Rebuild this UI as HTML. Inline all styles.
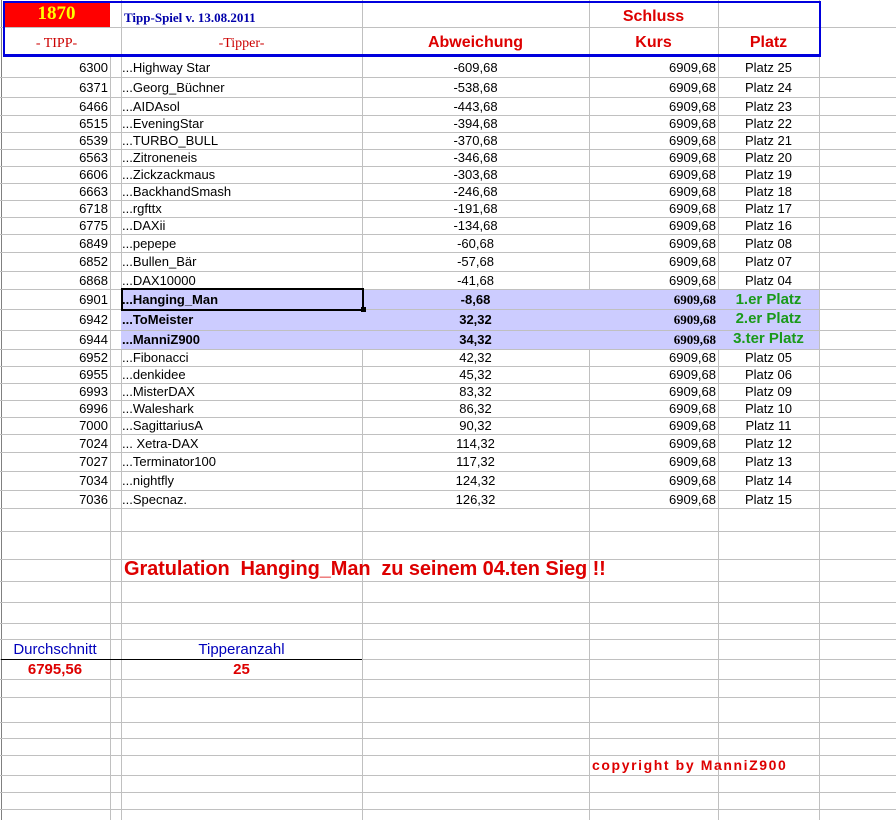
<!DOCTYPE html>
<html><head><meta charset="utf-8"><style>
html,body{overflow:hidden}
body{margin:0;width:896px;height:820px;background:#fff;position:relative;overflow:hidden;font-family:"Liberation Sans",sans-serif;}
.h{position:absolute;left:0;width:896px;height:1px;background:#c0c0c0}
.v{position:absolute;top:0;height:820px;width:1px;background:#c0c0c0}
.r{position:absolute;left:0;width:896px;font-size:13px;color:#000}
.r span{position:absolute;top:0;white-space:nowrap}
.t{right:788px}
.n{left:122px}
.a{left:362px;width:227px;text-align:center}
.k{right:180px}
.p{left:718px;width:101px;text-align:center}
.hl{background:#ccccff}
.b{font-weight:bold}
.b .k{font-family:"Liberation Serif",serif;font-size:13px}
.g{color:#1a9a1a;font-weight:bold;font-size:15px}
</style></head><body>
<div class="v" style="left:1px;background:#808080"></div>
<div class="v" style="left:110px;top:55px;height:765px"></div>
<div class="v" style="left:121px"></div>
<div class="v" style="left:362px"></div>
<div class="v" style="left:589px"></div>
<div class="v" style="left:718px"></div>
<div class="v" style="left:819px"></div>

<div class="hl" style="position:absolute;left:121px;top:289px;width:698px;height:60px"></div>

<div class="h" style="top:27px"></div>
<div class="h" style="top:77px"></div><div class="h" style="top:97px"></div><div class="h" style="top:115px"></div><div class="h" style="top:132px"></div><div class="h" style="top:149px"></div><div class="h" style="top:166px"></div><div class="h" style="top:183px"></div><div class="h" style="top:200px"></div><div class="h" style="top:217px"></div><div class="h" style="top:234px"></div><div class="h" style="top:252px"></div><div class="h" style="top:271px"></div><div class="h" style="top:289px"></div><div class="h" style="top:309px"></div><div class="h" style="top:330px"></div><div class="h" style="top:349px"></div><div class="h" style="top:366px"></div><div class="h" style="top:383px"></div><div class="h" style="top:400px"></div><div class="h" style="top:417px"></div><div class="h" style="top:434px"></div><div class="h" style="top:452px"></div><div class="h" style="top:471px"></div><div class="h" style="top:490px"></div><div class="h" style="top:508px"></div><div class="h" style="top:531px"></div><div class="h" style="top:559px"></div><div class="h" style="top:581px"></div><div class="h" style="top:602px"></div><div class="h" style="top:623px"></div><div class="h" style="top:639px"></div><div class="h" style="top:659px"></div><div class="h" style="top:679px"></div><div class="h" style="top:697px"></div><div class="h" style="top:722px"></div><div class="h" style="top:738px"></div><div class="h" style="top:755px"></div><div class="h" style="top:775px"></div><div class="h" style="top:792px"></div><div class="h" style="top:809px"></div>

<!-- header -->
<div style="position:absolute;left:3px;top:2px;width:107px;height:25px;background:#ff0000;"></div>
<div style="position:absolute;left:3px;top:3px;width:107px;height:27px;line-height:27px;text-align:center;font:bold 19px 'Liberation Serif',serif;color:#ffff00">1870</div>
<div style="position:absolute;left:3px;top:1px;height:51px;border:2px solid #0000dd;border-bottom-width:3px;width:814px"></div>
<div style="position:absolute;left:124px;top:10px;font:bold 13px 'Liberation Serif',serif;color:#0000aa">Tipp-Spiel v. 13.08.2011</div>
<div style="position:absolute;left:589px;width:129px;top:8px;text-align:center;font:bold 16px 'Liberation Sans',sans-serif;color:#dd0000">Schluss</div>
<div style="position:absolute;left:3px;width:107px;top:36px;text-align:center;font:14px 'Liberation Serif',serif;color:#cc0000">- TIPP-</div>
<div style="position:absolute;left:121px;width:241px;top:36px;text-align:center;font:14px 'Liberation Serif',serif;color:#cc0000">-Tipper-</div>
<div style="position:absolute;left:362px;width:227px;top:34px;text-align:center;font:bold 16px 'Liberation Sans',sans-serif;color:#dd0000">Abweichung</div>
<div style="position:absolute;left:589px;width:129px;top:34px;text-align:center;font:bold 16px 'Liberation Sans',sans-serif;color:#dd0000">Kurs</div>
<div style="position:absolute;left:718px;width:101px;top:34px;text-align:center;font:bold 16px 'Liberation Sans',sans-serif;color:#dd0000">Platz</div>

<div class="r" style="top:59px;height:18px;line-height:18px"><span class="t">6300</span><span class="n">...Highway Star</span><span class="a">-609,68</span><span class="k">6909,68</span><span class="p">Platz 25</span></div>
<div class="r" style="top:78px;height:19px;line-height:19px"><span class="t">6371</span><span class="n">...Georg_Büchner</span><span class="a">-538,68</span><span class="k">6909,68</span><span class="p">Platz 24</span></div>
<div class="r" style="top:98px;height:17px;line-height:17px"><span class="t">6466</span><span class="n">...AIDAsol</span><span class="a">-443,68</span><span class="k">6909,68</span><span class="p">Platz 23</span></div>
<div class="r" style="top:116px;height:16px;line-height:16px"><span class="t">6515</span><span class="n">...EveningStar</span><span class="a">-394,68</span><span class="k">6909,68</span><span class="p">Platz 22</span></div>
<div class="r" style="top:133px;height:16px;line-height:16px"><span class="t">6539</span><span class="n">...TURBO_BULL</span><span class="a">-370,68</span><span class="k">6909,68</span><span class="p">Platz 21</span></div>
<div class="r" style="top:150px;height:16px;line-height:16px"><span class="t">6563</span><span class="n">...Zitroneneis</span><span class="a">-346,68</span><span class="k">6909,68</span><span class="p">Platz 20</span></div>
<div class="r" style="top:167px;height:16px;line-height:16px"><span class="t">6606</span><span class="n">...Zickzackmaus</span><span class="a">-303,68</span><span class="k">6909,68</span><span class="p">Platz 19</span></div>
<div class="r" style="top:184px;height:16px;line-height:16px"><span class="t">6663</span><span class="n">...BackhandSmash</span><span class="a">-246,68</span><span class="k">6909,68</span><span class="p">Platz 18</span></div>
<div class="r" style="top:201px;height:16px;line-height:16px"><span class="t">6718</span><span class="n">...rgfttx</span><span class="a">-191,68</span><span class="k">6909,68</span><span class="p">Platz 17</span></div>
<div class="r" style="top:218px;height:16px;line-height:16px"><span class="t">6775</span><span class="n">...DAXii</span><span class="a">-134,68</span><span class="k">6909,68</span><span class="p">Platz 16</span></div>
<div class="r" style="top:235px;height:17px;line-height:17px"><span class="t">6849</span><span class="n">...pepepe</span><span class="a">-60,68</span><span class="k">6909,68</span><span class="p">Platz 08</span></div>
<div class="r" style="top:253px;height:18px;line-height:18px"><span class="t">6852</span><span class="n">...Bullen_Bär</span><span class="a">-57,68</span><span class="k">6909,68</span><span class="p">Platz 07</span></div>
<div class="r" style="top:272px;height:17px;line-height:17px"><span class="t">6868</span><span class="n">...DAX10000</span><span class="a">-41,68</span><span class="k">6909,68</span><span class="p">Platz 04</span></div>
<div class="r b" style="top:290px;height:19px;line-height:19px"><span class="t" style="font-weight:normal">6901</span><span class="n">...Hanging_Man</span><span class="a">-8,68</span><span class="k">6909,68</span><span class="p g">1.er Platz</span></div>
<div class="r b" style="top:310px;height:20px;line-height:20px"><span class="t" style="font-weight:normal">6942</span><span class="n">...ToMeister</span><span class="a">32,32</span><span class="k">6909,68</span><span class="p g" style="line-height:17px">2.er Platz</span></div>
<div class="r b" style="top:331px;height:18px;line-height:18px"><span class="t" style="font-weight:normal">6944</span><span class="n">...ManniZ900</span><span class="a">34,32</span><span class="k">6909,68</span><span class="p g" style="line-height:15px">3.ter Platz</span></div>
<div style="position:absolute;left:121px;top:288px;width:239px;height:19px;border:2px solid #000"></div>
<div style="position:absolute;left:361px;top:307px;width:5px;height:5px;background:#000"></div>
<div class="r" style="top:350px;height:16px;line-height:16px"><span class="t">6952</span><span class="n">...Fibonacci</span><span class="a">42,32</span><span class="k">6909,68</span><span class="p">Platz 05</span></div>
<div class="r" style="top:367px;height:16px;line-height:16px"><span class="t">6955</span><span class="n">...denkidee</span><span class="a">45,32</span><span class="k">6909,68</span><span class="p">Platz 06</span></div>
<div class="r" style="top:384px;height:16px;line-height:16px"><span class="t">6993</span><span class="n">...MisterDAX</span><span class="a">83,32</span><span class="k">6909,68</span><span class="p">Platz 09</span></div>
<div class="r" style="top:401px;height:16px;line-height:16px"><span class="t">6996</span><span class="n">...Waleshark</span><span class="a">86,32</span><span class="k">6909,68</span><span class="p">Platz 10</span></div>
<div class="r" style="top:418px;height:16px;line-height:16px"><span class="t">7000</span><span class="n">...SagittariusA</span><span class="a">90,32</span><span class="k">6909,68</span><span class="p">Platz 11</span></div>
<div class="r" style="top:435px;height:17px;line-height:17px"><span class="t">7024</span><span class="n">... Xetra-DAX</span><span class="a">114,32</span><span class="k">6909,68</span><span class="p">Platz 12</span></div>
<div class="r" style="top:453px;height:18px;line-height:18px"><span class="t">7027</span><span class="n">...Terminator100</span><span class="a">117,32</span><span class="k">6909,68</span><span class="p">Platz 13</span></div>
<div class="r" style="top:472px;height:18px;line-height:18px"><span class="t">7034</span><span class="n">...nightfly</span><span class="a">124,32</span><span class="k">6909,68</span><span class="p">Platz 14</span></div>
<div class="r" style="top:491px;height:17px;line-height:17px"><span class="t">7036</span><span class="n">...Specnaz.</span><span class="a">126,32</span><span class="k">6909,68</span><span class="p">Platz 15</span></div>

<div style="position:absolute;left:124px;top:558px;font:bold 20px 'Liberation Sans',sans-serif;letter-spacing:-0.1px;color:#dd0000;white-space:nowrap">Gratulation&nbsp; Hanging_Man&nbsp; zu seinem 04.ten Sieg !!</div>

<div style="position:absolute;left:0;width:110px;top:641px;text-align:center;font:15px 'Liberation Sans',sans-serif;color:#0000bb">Durchschnitt</div>
<div style="position:absolute;left:121px;width:241px;top:641px;text-align:center;font:15px 'Liberation Sans',sans-serif;color:#0000bb">Tipperanzahl</div>
<div style="position:absolute;left:1px;top:659px;width:361px;height:1px;background:#000"></div>
<div style="position:absolute;left:0;width:110px;top:661px;text-align:center;font:bold 15px 'Liberation Sans',sans-serif;color:#dd0000">6795,56</div>
<div style="position:absolute;left:121px;width:241px;top:661px;text-align:center;font:bold 15px 'Liberation Sans',sans-serif;color:#dd0000">25</div>

<div style="position:absolute;left:592px;top:757px;font:bold 14px 'Liberation Sans',sans-serif;letter-spacing:1.6px;color:#dd0000;white-space:nowrap">copyright by ManniZ900</div>
</body></html>
